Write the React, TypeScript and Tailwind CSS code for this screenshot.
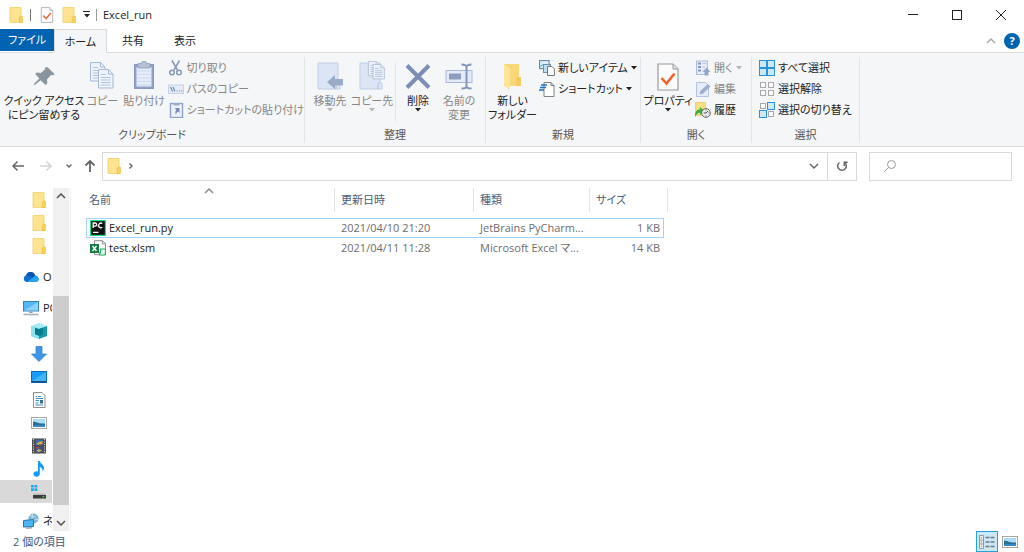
import React from 'react';

type IconProps = { className?: string };

const Folder = ({ className = 'w-4 h-4' }: IconProps) => (
  <svg viewBox="0 0 16 16" className={className}>
    <path d="M2 .5h11v9h1.200v6H2z" fill="#fee391" stroke="#f3cf66" strokeWidth=".8" />
    <path d="M11.300 15.500V10l1-.8h1.900v6.300z" fill="#fbd45f" stroke="#e9bd45" strokeWidth=".7" />
  </svg>
);

const CheckDoc = ({ className = 'w-4 h-4' }: IconProps) => (
  <svg viewBox="0 0 22 28" className={className}>
    <path d="M1 1h15l5 5v21H1z" fill="#fbfbfb" stroke="#9a9a9a" strokeWidth="1.200" />
    <path d="M16 1v5h5" fill="#e4e4e4" stroke="#9a9a9a" />
    <path d="M4.500 15l5 5.500 8-10" fill="none" stroke="#f0642c" strokeWidth="2.600" />
  </svg>
);

const Caret = ({ className = 'text-[#222]' }: IconProps) => (
  <svg viewBox="0 0 6 4" className={'w-1.5 h-1 shrink-0 ' + className}>
    <path d="M0 0h6L3 3.500z" fill="currentColor" />
  </svg>
);

const Chevron = ({ className = '', d }: IconProps & { d: string }) => (
  <svg viewBox="0 0 10 10" className={'w-2.5 h-2.5 shrink-0 ' + className} fill="none" stroke="currentColor" strokeWidth="1.500">
    <path d={d} />
  </svg>
);

const UP = 'M1 7l4-4 4 4';
const DOWN = 'M1 3l4 4 4-4';

const Pin = () => (
  <svg viewBox="0 0 32 32" className="w-8 h-8">
    <g transform="translate(1.500 1.500) scale(.88)">
      <path d="M20.500 5.500l8 7.500-1.500 1.500-2.500-.2-4.500 4.700.2 4.800-2 1.900-5.700-5.500-6.500 5.500-1-.3.200-1.200 6-6-4.700-5 1.700-1.800 4.800.4 4.600-4.200-.2-2z" fill="#8b959d" />
    </g>
  </svg>
);

const Page = ({ x, y }: { x: number; y: number }) => (
  <g transform={`translate(${x} ${y})`}>
    <path d="M.5.5h10l4.500 4.500v14H.5z" fill="#eef2fa" stroke="#a9b8d6" />
    <path d="M10.500.5V5H15" fill="none" stroke="#a9b8d6" />
    <path d="M3 5.500h5M3 8.500h9.500M3 11h9.500M3 13.500h9.500M3 16h9.500" stroke="#b3c3e2" strokeWidth="1.200" />
  </g>
);

const Copy = () => (
  <svg viewBox="0 0 32 32" className="w-8 h-8">
    <Page x={4} y={1} />
    <Page x={12} y={8} />
  </svg>
);

const Paste = () => (
  <svg viewBox="0 0 32 32" className="w-8 h-8">
    <rect x="6.500" y="3.500" width="19" height="24" fill="#8fa1c5" stroke="#8799be" />
    <rect x="8.500" y="6" width="15" height="19.500" fill="#e7eefb" />
    <path d="M9 10h14M9 13.500h14M9 17h14M9 20.500h14M9 24h14" stroke="#cbd8f0" />
    <path d="M10 2.500h3.500a2.500 2.500 0 015 0H22V7H10z" fill="#b6c1d6" stroke="#8d9cba" strokeWidth=".8" />
  </svg>
);

const MoveTo = () => (
  <svg viewBox="0 0 32 32" className="w-8 h-8">
    <path d="M4 2h20v20h2v6H4z" fill="#dbe5f6" stroke="#c0cfe8" />
    <path d="M22 28v-5l2-2" fill="none" stroke="#aebfdd" />
    <path d="M13 21l8-7v4h8v6.500h-8V28z" fill="#9baccb" />
  </svg>
);

const CopyTo = () => (
  <svg viewBox="0 0 32 32" className="w-8 h-8">
    <path d="M4 2h20v20h2v6H4z" fill="#dbe5f6" stroke="#c0cfe8" />
    <path d="M22 28v-5l2-2" fill="none" stroke="#aebfdd" />
    <g transform="translate(12 0) scale(.78)">
      <Page x={0} y={0} />
      <Page x={6} y={4} />
    </g>
  </svg>
);

const Delete = () => (
  <svg viewBox="0 0 32 32" className="w-8 h-8">
    <path d="M5 4.500L27 26.500M27 4.500L5 26.500" stroke="#7c8eb3" strokeWidth="4" />
  </svg>
);

const Rename = () => (
  <svg viewBox="0 0 32 32" className="w-8 h-8">
    <rect x="3" y="9.500" width="26" height="12" fill="#e3ebf8" stroke="#a9bad9" />
    <rect x="6" y="12.500" width="12" height="6" fill="#8c9dbf" />
    <path d="M18.500 3.500c3 0 5 .5 5 2.500v19c0 2-2 2.500-5 2.500M28.500 3.500c-3 0-5 .5-5 2.500M28.500 27.500c-3 0-5-.5-5-2.500" fill="none" stroke="#8395ba" strokeWidth="2" />
  </svg>
);

const BigFolder = () => (
  <svg viewBox="0 0 32 32" className="w-8 h-8">
    <path d="M7 3h15v14l2 1v7H10z" fill="#f7d778" />
    <path d="M7 3l6 4v22l-6-4z" fill="#fee59a" />
    <path d="M19 25v-7l2-2h3v9z" fill="#f2cc60" />
  </svg>
);

const Cut = () => (
  <svg viewBox="0 0 16 16" className="w-4 h-4" fill="none" stroke="#8797b6" strokeWidth="1.500">
    <path d="M4 .5l5.500 9.500M11.500.5L6 10" />
    <circle cx="4" cy="12.500" r="2.300" />
    <circle cx="11" cy="12.500" r="2.300" />
  </svg>
);

const PathCopy = () => (
  <svg viewBox="0 0 16 16" className="w-4 h-4">
    <rect x=".5" y="4" width="15" height="8.500" fill="#e6edf8" stroke="#c3d0e6" />
    <path d="M2.500 6l2 4.500M5 6l2 4.500M8.500 10h1.200M11 10h1.200M13.300 10h1.200" stroke="#7285ab" strokeWidth="1.200" />
  </svg>
);

const PasteShortcut = () => (
  <svg viewBox="0 0 16 16" className="w-4 h-4">
    <rect x="2.500" y="1.500" width="12" height="14" fill="#edf2fb" stroke="#8fa1c5" strokeWidth="1.400" />
    <path d="M5.500 1h6v2.500h-6z" fill="#9cabc8" />
    <path d="M6.500 6h5v5L10 9.500c-1.500.8-1.800 2-2 3.500-1.200-2.500-.6-4 .4-5.200z" fill="#7789af" />
  </svg>
);

const NewItem = () => (
  <svg viewBox="0 0 16 16" className="w-4 h-4">
    <rect x=".6" y=".6" width="9.500" height="8" fill="#dceffa" stroke="#5b7f9b" />
    <path d="M1 6.500l3-2 3 2" fill="none" stroke="#4aa3c7" />
    <rect x="4.500" y="4.500" width="7" height="8" fill="#bcdff5" stroke="#6d8ea5" />
    <path d="M8.500 6.500h4.500l2.400 2.400v6.600H8.500z" fill="#fff" stroke="#777" />
  </svg>
);

const Shortcut = () => (
  <svg viewBox="0 0 16 16" className="w-4 h-4">
    <path d="M5 1.500h7l3 3v11H5z" fill="#fff" stroke="#808080" />
    <path d="M12 1.500v3h3" fill="none" stroke="#808080" />
    <path d="M2 4h6M1 6.500h6M0 9h5" stroke="#1d74c4" strokeWidth="1.400" />
  </svg>
);

const OpenIcon = () => (
  <svg viewBox="0 0 16 16" className="w-4 h-4">
    <rect x="1.500" y="1" width="11" height="13.500" fill="#e6edf8" stroke="#adbcd8" />
    <path d="M3 3.500h3M3 7h3M3 10.500h3" stroke="#8698be" strokeWidth="2" />
    <path d="M7.500 3.500h3.500M7.500 7H10" stroke="#b4c2dd" />
    <path d="M9.500 15.500V12H7.500l4-4.500 4 4.500h-2v3.500z" fill="#95a6c8" />
  </svg>
);

const Edit = () => (
  <svg viewBox="0 0 16 16" className="w-4 h-4">
    <path d="M1.500 1.500h9l3 3v11h-12z" fill="#e6edfa" stroke="#b4c3df" />
    <path d="M5 13l.8-3L13 3.500l2 2L8 12.200z" fill="#9fb0d1" stroke="#8a9cc1" strokeWidth=".6" />
  </svg>
);

const History = () => (
  <svg viewBox="0 0 16 16" className="w-4 h-4">
    <path d="M.5.5h10v13H.5z" fill="#fbdf83" stroke="#ebc658" strokeWidth=".7" />
    <path d="M0 15c0-5 1.500-7.500 5-7.700V5l4.500 4-4.500 4v-2.300C3 10.800 1.500 12 0 15z" fill="#3fae3a" />
    <circle cx="11" cy="11" r="4.400" fill="#e9e9e9" stroke="#6c6c6c" />
    <path d="M11 11l2-2M11 11H8.800M11 7.500v.8M14.500 11h-.8M11 14.500v-.8" stroke="#555" />
  </svg>
);

const Grid = ({ fills }: { fills: boolean[] }) => (
  <svg viewBox="0 0 16 16" className="w-4 h-4">
    {fills.map((on, i) => (
      <rect
        key={i}
        x={on ? (i % 2) * 8 + 0.5 : (i % 2) * 8 + 1.5}
        y={on ? Math.floor(i / 2) * 8 + 0.5 : Math.floor(i / 2) * 8 + 1.5}
        width={on ? 7 : 5}
        height={on ? 7 : 5}
        fill={on ? '#cbe8fd' : '#fdfdfd'}
        stroke={on ? '#2a91dc' : '#a9a9a9'}
      />
    ))}
  </svg>
);

const OneDrive = () => (
  <svg viewBox="0 0 16 16" className="w-4 h-4">
    <path d="M4 13a3.500 3.500 0 01-.8-6.800A4.600 4.600 0 0112 6.500 3.300 3.300 0 0112.800 13z" fill="#0f6fd0" />
    <path d="M4 13l7.500-5.500a3 3 0 014.200 3.500c-.4 1.300-1.500 2-2.900 2z" fill="#28a3ec" />
    <path d="M3.200 6.200A4.600 4.600 0 0112 6.500L9 8.300z" fill="#0a56ac" />
  </svg>
);

const Pc = () => (
  <svg viewBox="0 0 16 16" className="w-4 h-4">
    <rect x=".5" y="1.500" width="15" height="9.500" fill="#53b6f5" stroke="#3b82b5" />
    <path d="M1 10.500L15 2v8.500z" fill="#8bd1fb" />
    <path d="M6.500 11.500h3v1.500h-3z" fill="#8b9aa5" />
    <path d="M.5 14.500h15" stroke="#a6b1ba" strokeWidth="1.600" />
  </svg>
);

const Cube = () => (
  <svg viewBox="0 0 16 16" className="w-4 h-4">
    <path d="M0 3l8-3 8 3-8 3z" fill="#a4ebf2" />
    <path d="M0 3l8 3v10l-8-3z" fill="#5dd0dd" />
    <path d="M16 3L8 6v10l8-3z" fill="#149aab" />
    <path d="M4 4.500l4 1.500 4-1.500v7L8 13l-4-1.500z" fill="#0b7c8c" />
    <path d="M0 3l4 1.500v7L8 13v3l-8-3z" fill="#8fe1ea" />
  </svg>
);

const Download = () => (
  <svg viewBox="0 0 16 16" className="w-4 h-4">
    <path d="M5 .5h6v7.500h4.500L8 15.500.5 8H5z" fill="#3f95e6" stroke="#2b7cc9" strokeWidth=".7" />
  </svg>
);

const Desktop = () => (
  <svg viewBox="0 0 16 16" className="w-4 h-4">
    <rect x=".5" y="2.500" width="15" height="11" fill="#169ef4" stroke="#0a6cb4" />
    <path d="M1 12L15 3v9z" fill="#45b5fa" />
    <path d="M1 12.700h14" stroke="#12436b" strokeWidth="1.200" />
  </svg>
);

const DocIcon = () => (
  <svg viewBox="0 0 16 16" className="w-4 h-4">
    <path d="M2.500.5h8.500l3 3v12H2.500z" fill="#fff" stroke="#8f8f8f" />
    <path d="M4.500 4.500h1.500M7 4.500h3M4.500 6.500h7.500M4.500 8.500h3.500M4.500 11h3M4.500 13h7.500" stroke="#3c93ce" />
    <path d="M9 8h3v3.500H9z" fill="#2f6f99" />
  </svg>
);

const Picture = () => (
  <svg viewBox="0 0 16 16" className="w-4 h-4">
    <rect x=".5" y="2.500" width="15" height="11" fill="#fff" stroke="#a7a7a7" />
    <path d="M2 4h12v8H2z" fill="#a8dcf7" />
    <path d="M2 7c3-1 4 2 12 1.500V12H2z" fill="#2d6f93" />
    <path d="M2 10.500c4-1 8 0 12-.5v2H2z" fill="#3787c9" />
  </svg>
);

const Video = () => (
  <svg viewBox="0 0 16 16" className="w-4 h-4">
    <rect x="1" y=".5" width="14" height="15" fill="#454545" />
    <path d="M2.500 1v14M13.500 1v14" stroke="#d0d0d0" strokeWidth="1.300" strokeDasharray="1.200 1.200" />
    <path d="M4.500 1.500h7v6h-7z" fill="#3f6bb0" />
    <path d="M4.500 8.500h7v6h-7z" fill="#33589a" />
    <path d="M5 6l3-2 3.500-1v3L8 7zM5 13l3-2 3 1.500-3 1.500z" fill="#d2b04a" />
    <path d="M8 6h3v1.500H8zM5 9h3v1.500H5z" fill="#b6483c" />
  </svg>
);

const Music = () => (
  <svg viewBox="0 0 16 16" className="w-4 h-4">
    <path d="M7 0h1.800c.4 3 4.200 3.500 4.200 7 0 1.600-.8 2.800-1.800 3.700.7-2.700-.3-4-2.400-4.700v7a3.200 2.700 0 11-1.800-2.400z" fill="#149bf3" />
  </svg>
);

const Drive = () => (
  <svg viewBox="0 0 16 16" className="w-4 h-4">
    <path d="M0 1h2.800v2.600H0zM3.500 1h2.800v2.600H3.500zM0 4.300h2.800v2.600H0zM3.500 4.300h2.800v2.600H3.500z" fill="#14b0ea" />
    <path d="M3 9.500h11l1 1.500H2z" fill="#bcbcbc" />
    <rect x="2" y="11" width="13" height="3.500" fill="#3b3b3b" />
    <path d="M11.500 12.700h2" stroke="#4be05a" />
  </svg>
);

const Network = () => (
  <svg viewBox="0 0 16 16" className="w-4 h-4">
    <circle cx="10.500" cy="5.500" r="5" fill="#76b5d8" />
    <path d="M7 2.500c2 1 4 .2 6 2M6 7c2-1 5 1 9-1M10 .5c-1.500 3-1 6 0 9" fill="none" stroke="#c6e4f2" />
    <path d="M.5 7.500l10-1v7l-10 .5z" fill="#4db4f3" stroke="#2472a8" />
    <path d="M3 15.200l6-.4" stroke="#8a9aa6" strokeWidth="1.200" />
  </svg>
);

const PyCharm = () => (
  <svg viewBox="0 0 16 16" className="w-4 h-4 shrink-0">
    <rect width="16" height="16" fill="#21d789" />
    <rect x="1.200" y="1.200" width="13.600" height="13.600" fill="#111" />
    <path d="M3.200 8V3h1.900a1.500 1.500 0 010 3.100H3.200M12.300 3.600a2.300 2.300 0 100 3.600M3 12.300h5.500" fill="none" stroke="#fff" strokeWidth="1.300" />
  </svg>
);

const Excel = () => (
  <svg viewBox="0 0 16 16" className="w-4 h-4 shrink-0">
    <path d="M4.500.7h8l3 3v11H4.500z" fill="#fff" stroke="#8c8c8c" />
    <path d="M12.300.7v3.200h3.200" fill="none" stroke="#8c8c8c" />
    <rect y="4" width="9" height="9" fill="#127a42" />
    <path d="M2.500 6l4 5M6.500 6l-4 5" stroke="#fff" strokeWidth="1.400" />
    <path d="M10.500 9h5v4.500a1.500 1.500 0 01-1.500 1.500H9.500V13h1z" fill="#e4f7ec" stroke="#27ae68" strokeWidth="1.200" />
  </svg>
);

const DetailsView = () => (
  <svg viewBox="0 0 16 16" className="w-4 h-4">
    <path d="M.5 1.500h4v13h-4zM.5 6h4M.5 10h4" fill="#f4f4f4" stroke="#8b9aa3" />
    <path d="M1.800 3.800h1.400M1.800 8h1.400M1.800 12.200h1.400" stroke="#d07058" />
    <path d="M6.500 3.500h4M11.500 3.500h4M6.500 8h4M11.500 8h4M6.500 12.500h4M11.500 12.500h4" stroke="#6b7a83" strokeWidth="1.300" />
  </svg>
);

function Group({ label, className, children }: { label: string; className: string; children: React.ReactNode }) {
  return (
    <section className={'flex flex-col border-r border-[#e1e3e5] ' + className}>
      <div className="flex h-[72px]">{children}</div>
      <div className="text-center leading-4 text-[#555]">{label}</div>
    </section>
  );
}

type BigProps = { icon: React.ReactNode; lines: string[]; className: string; caret?: string };

function BigButton({ icon, lines, className, caret }: BigProps) {
  return (
    <button className={'flex flex-col items-center pt-1 leading-[14px] whitespace-nowrap ' + className}>
      {icon}
      <span className="mt-px flex flex-col items-center">
        {lines.map((l) => (
          <span key={l}>{l}</span>
        ))}
      </span>
      {caret && <Caret className={caret} />}
    </button>
  );
}

function SmallButton({ icon, label, caret, off }: { icon: React.ReactNode; label: string; caret?: boolean; off?: boolean }) {
  return (
    <button className={'flex h-[21px] items-center gap-[3px] whitespace-nowrap ' + (off ? 'text-[#868686]' : 'text-[#222]')}>
      {icon}
      {label}
      {caret && <Caret className={off ? 'text-[#b5b5b5]' : 'text-[#222]'} />}
    </button>
  );
}

const places = [
  { name: '3D オブジェクト', icon: <Cube /> },
  { name: 'ダウンロード', icon: <Download /> },
  { name: 'デスクトップ', icon: <Desktop /> },
  { name: 'ドキュメント', icon: <DocIcon /> },
  { name: 'ピクチャ', icon: <Picture /> },
  { name: 'ビデオ', icon: <Video /> },
  { name: 'ミュージック', icon: <Music /> },
  { name: 'ドライブ', icon: <Drive />, selected: true },
];

const files = [
  { name: 'Excel_run.py', date: '2021/04/10 21:20', type: 'JetBrains PyCharm...', size: '1 KB', icon: <PyCharm />, focused: true },
  { name: 'test.xlsm', date: '2021/04/11 11:28', type: 'Microsoft Excel マ...', size: '14 KB', icon: <Excel />, focused: false },
];

function Sidebar() {
  return (
    <aside className="flex w-[69px] shrink-0 bg-white">
      <nav className="w-[52px] overflow-hidden whitespace-nowrap">
        {[1, 2, 3].map((n) => (
          <a key={n} href="#" aria-label={'フォルダー ' + n} className="flex h-[23px] items-center pl-[31px]">
            <Folder className="h-4 w-4 shrink-0" />
          </a>
        ))}
        <a href="#" className="mt-2 flex h-[23px] items-center gap-1 pl-[23px]">
          <span className="shrink-0"><OneDrive /></span>OneDrive
        </a>
        <a href="#" className="mt-2 flex h-[23px] items-center gap-1 pl-[23px]">
          <span className="shrink-0"><Pc /></span>PC
        </a>
        {places.map((p) => (
          <a key={p.name} href="#" aria-label={p.name} className={'flex h-[23px] items-center pl-[31px] ' + (p.selected ? 'bg-[#d9d9d9]' : '')}>
            {p.icon}
          </a>
        ))}
        <a href="#" className="mt-2 flex h-5 items-center gap-1 pl-[23px]">
          <span className="shrink-0"><Network /></span>ネットワーク
        </a>
      </nav>
      <div className="ml-px flex w-4 flex-col bg-[#f0f0f0] text-[#505050]">
        <button aria-label="上へスクロール" className="flex h-4 items-center justify-center"><Chevron d={UP} /></button>
        <div className="mt-[92px] h-[209px] bg-[#cdcdcd]" />
        <button aria-label="下へスクロール" className="mt-auto flex h-4 items-center justify-center"><Chevron d={DOWN} /></button>
      </div>
    </aside>
  );
}

function FileTable() {
  return (
    <table className="w-[582px] table-fixed border-separate border-spacing-0 text-left">
      <colgroup>
        <col className="w-[249px]" />
        <col className="w-[139px]" />
        <col className="w-[116px]" />
        <col className="w-[74px]" />
        <col className="w-1" />
      </colgroup>
      <thead className="text-[#4c607a]">
        <tr className="h-6">
          <th className="relative border-r border-[#e5e5e5] pl-[3px] font-normal">
            名前
            <Chevron d={UP} className="absolute -top-0.5 left-[118px] text-[#8a8a8a]" />
          </th>
          <th className="border-r border-[#e5e5e5] pl-1.5 font-normal">更新日時</th>
          <th className="border-r border-[#e5e5e5] pl-1.5 font-normal">種類</th>
          <th className="pl-1.5 font-normal">サイズ</th>
          <td className="border-r border-[#e5e5e5]" />
        </tr>
      </thead>
      <tbody className="text-[#6d6d6d]">
        <tr className="h-1.5"><td colSpan={5} /></tr>
        {files.map((f) => {
          const line = f.focused ? 'border-[#a5d5fb]' : 'border-transparent';
          return (
            <tr key={f.name} className="h-5">
              <td className={'border-y border-l pl-[3px] ' + line}>
                <span className="flex items-center gap-[3px] text-[#222]">{f.icon}{f.name}</span>
              </td>
              <td className={'border-y pl-1.5 ' + line}>{f.date}</td>
              <td className={'border-y pl-1.5 whitespace-nowrap ' + line}>{f.type}</td>
              <td className={'border-y border-r pr-[3px] text-right ' + line}>{f.size}</td>
              <td />
            </tr>
          );
        })}
      </tbody>
    </table>
  );
}

export default function App() {
  return (
    <div className="flex min-h-screen flex-col bg-white font-['Open_Sans','Noto_Sans_CJK_JP',sans-serif] text-[11px] leading-4 text-[#222] [font-feature-settings:'palt']">
      <header className="flex h-[29px] items-center pl-2">
        <Folder />
        <span className="mx-1.5 h-3 w-px bg-[#777]" />
        <button aria-label="プロパティ" className="ml-0.5"><CheckDoc /></button>
        <button aria-label="新しいフォルダー" className="ml-1.5"><Folder /></button>
        <button aria-label="カスタマイズ" className="ml-1.5 flex flex-col items-center gap-0.5">
          <span className="h-px w-[7px] bg-[#222]" />
          <Caret />
        </button>
        <span className="mx-1.5 h-3 w-px bg-[#999]" />
        <h1>Excel_run</h1>
        <div className="ml-auto flex h-full pr-px text-[#222]">
          <button aria-label="最小化" className="flex w-11 items-center justify-center"><span className="h-px w-2.5 bg-[#222]" /></button>
          <button aria-label="最大化" className="flex w-11 items-center justify-center"><span className="h-2.5 w-2.5 border border-[#222]" /></button>
          <button aria-label="閉じる" className="flex w-11 items-center justify-center">
            <svg viewBox="0 0 10 10" className="h-2.5 w-2.5" stroke="currentColor"><path d="M0 0l10 10M10 0L0 10" /></svg>
          </button>
        </div>
      </header>

      <div className="flex h-[23px] items-stretch pr-1">
        <button className="mb-px w-[54px] bg-[#0063b1] text-white">ファイル</button>
        <button className="relative z-10 -mb-px w-[53px] border-x border-t border-[#dadbdc] bg-[#f5f6f7]">ホーム</button>
        <button className="w-[52px]">共有</button>
        <button className="w-[52px]">表示</button>
        <div className="ml-auto flex items-center gap-2">
          <button aria-label="リボンを縮小"><Chevron d={UP} className="text-[#aaa]" /></button>
          <button aria-label="ヘルプ" className="flex h-4 w-4 items-center justify-center rounded-full bg-[#0063b1] font-bold text-white">?</button>
        </div>
      </div>

      <div className="flex h-[95px] border-y border-[#dadbdc] bg-[#f5f6f7] pt-1 pb-[3px]">
        <Group label="クリップボード" className="w-[305px]">
          <BigButton icon={<Pin />} lines={['クイック アクセス', 'にピン留めする']} className="w-[84px] pl-1" />
          <BigButton icon={<Copy />} lines={['コピー']} className="w-[38px] text-[#868686]" />
          <BigButton icon={<Paste />} lines={['貼り付け']} className="w-[48px] text-[#868686]" />
          <div className="flex flex-col">
            <SmallButton off icon={<Cut />} label="切り取り" />
            <SmallButton off icon={<PathCopy />} label="パスのコピー" />
            <SmallButton off icon={<PasteShortcut />} label="ショートカットの貼り付け" />
          </div>
        </Group>
        <Group label="整理" className="w-[181px]">
          <BigButton icon={<MoveTo />} lines={['移動先']} caret="text-[#b5b5b5]" className="w-[46px] pl-1 text-[#868686]" />
          <BigButton icon={<CopyTo />} lines={['コピー先']} caret="text-[#b5b5b5]" className="w-[42px] text-[#868686]" />
          <div className="my-1.5 ml-0.5 w-px bg-[#e1e3e5]" />
          <BigButton icon={<Delete />} lines={['削除']} caret="text-[#222]" className="w-[44px]" />
          <BigButton icon={<Rename />} lines={['名前の', '変更']} className="w-[38px] text-[#868686]" />
        </Group>
        <Group label="新規" className="w-[155px]">
          <BigButton icon={<BigFolder />} lines={['新しい', 'フォルダー']} className="w-[53px]" />
          <div className="flex flex-col">
            <SmallButton icon={<NewItem />} label="新しいアイテム" caret />
            <SmallButton icon={<Shortcut />} label="ショートカット" caret />
          </div>
        </Group>
        <Group label="開く" className="w-[111px]">
          <BigButton icon={<CheckDoc className="my-0.5 h-7 w-8" />} lines={['プロパティ']} caret="text-[#222]" className="w-[54px]" />
          <div className="flex flex-col">
            <SmallButton off icon={<OpenIcon />} label="開く" caret />
            <SmallButton off icon={<Edit />} label="編集" />
            <SmallButton icon={<History />} label="履歴" />
          </div>
        </Group>
        <Group label="選択" className="w-[108px]">
          <div className="flex flex-col pl-[7px]">
            <SmallButton icon={<Grid fills={[true, true, true, true]} />} label="すべて選択" />
            <SmallButton icon={<Grid fills={[false, false, false, false]} />} label="選択解除" />
            <SmallButton icon={<Grid fills={[false, true, true, false]} />} label="選択の切り替え" />
          </div>
        </Group>
      </div>

      <div className="flex h-[41px] items-center pt-px pr-3 pb-1 pl-3">
        <div className="flex w-[90px] items-center text-[#666]">
          <button aria-label="戻る">
            <svg viewBox="0 0 12 12" className="h-3 w-3" fill="none" stroke="currentColor" strokeWidth="1.500"><path d="M12 6H1M5.500 1.500L1 6l4.500 4.500" /></svg>
          </button>
          <button aria-label="進む" className="ml-4 text-[#d4d4d4]">
            <svg viewBox="0 0 12 12" className="h-3 w-3" fill="none" stroke="currentColor" strokeWidth="1.500"><path d="M0 6h11M6.500 1.500L11 6l-4.500 4.500" /></svg>
          </button>
          <button aria-label="最近表示した場所" className="ml-3.5">
            <svg viewBox="0 0 6 6" className="h-1.5 w-1.5" fill="none" stroke="currentColor" strokeWidth="1.400"><path d="M.5 1.500L3 4l2.500-2.500" /></svg>
          </button>
          <button aria-label="上へ" className="ml-3">
            <svg viewBox="0 0 12 12" className="h-3 w-3" fill="none" stroke="currentColor" strokeWidth="1.800"><path d="M6 12V1M1.500 5.500L6 1l4.500 4.500" /></svg>
          </button>
        </div>
        <div className="flex h-[29px] grow items-center border border-[#d9d9d9] pl-[3px] text-[#666]">
          <Folder />
          <svg viewBox="0 0 6 6" className="ml-1.5 h-1.5 w-1.5" fill="none" stroke="currentColor" strokeWidth="1.400"><path d="M1.500.5L4 3 1.500 5.500" /></svg>
          <button aria-label="履歴" className="ml-auto flex h-full w-7 items-center justify-center border-r border-[#d9d9d9]"><Chevron d={DOWN} /></button>
          <button aria-label="最新の情報に更新" className="flex h-full w-7 items-center justify-center">
            <svg viewBox="0 0 12 12" className="h-3 w-3" fill="none" stroke="currentColor" strokeWidth="1.500"><path d="M8.500 2.500A4.300 4.300 0 113.500 2.500M8.300 6V2.300h3.400" /></svg>
          </button>
        </div>
        <label className="ml-3 flex h-[29px] w-[143px] items-center border border-[#d9d9d9] pl-3.5">
          <svg viewBox="0 0 12 12" className="h-3 w-3 shrink-0" fill="none" stroke="#999"><circle cx="7.500" cy="4.500" r="4" /><path d="M4.600 7.400L.5 11.500" /></svg>
          <input type="search" aria-label="検索" className="ml-2 w-full min-w-0 outline-none" />
        </label>
      </div>

      <main className="flex grow">
        <Sidebar />
        <div className="ml-px grow border-l border-[#f3f3f3] pl-[15px]">
          <FileTable />
        </div>
      </main>

      <footer className="flex h-[21px] items-center pl-[13px] text-[#42597a]">
        <span>2 個の項目</span>
        <div className="ml-auto flex items-center gap-1 pr-1.5">
          <button aria-label="詳細" className="flex h-[21px] w-[22px] items-center justify-center border border-[#26a0da] bg-[#cce8f6]"><DetailsView /></button>
          <button aria-label="大アイコン"><Picture /></button>
        </div>
      </footer>
    </div>
  );
}
